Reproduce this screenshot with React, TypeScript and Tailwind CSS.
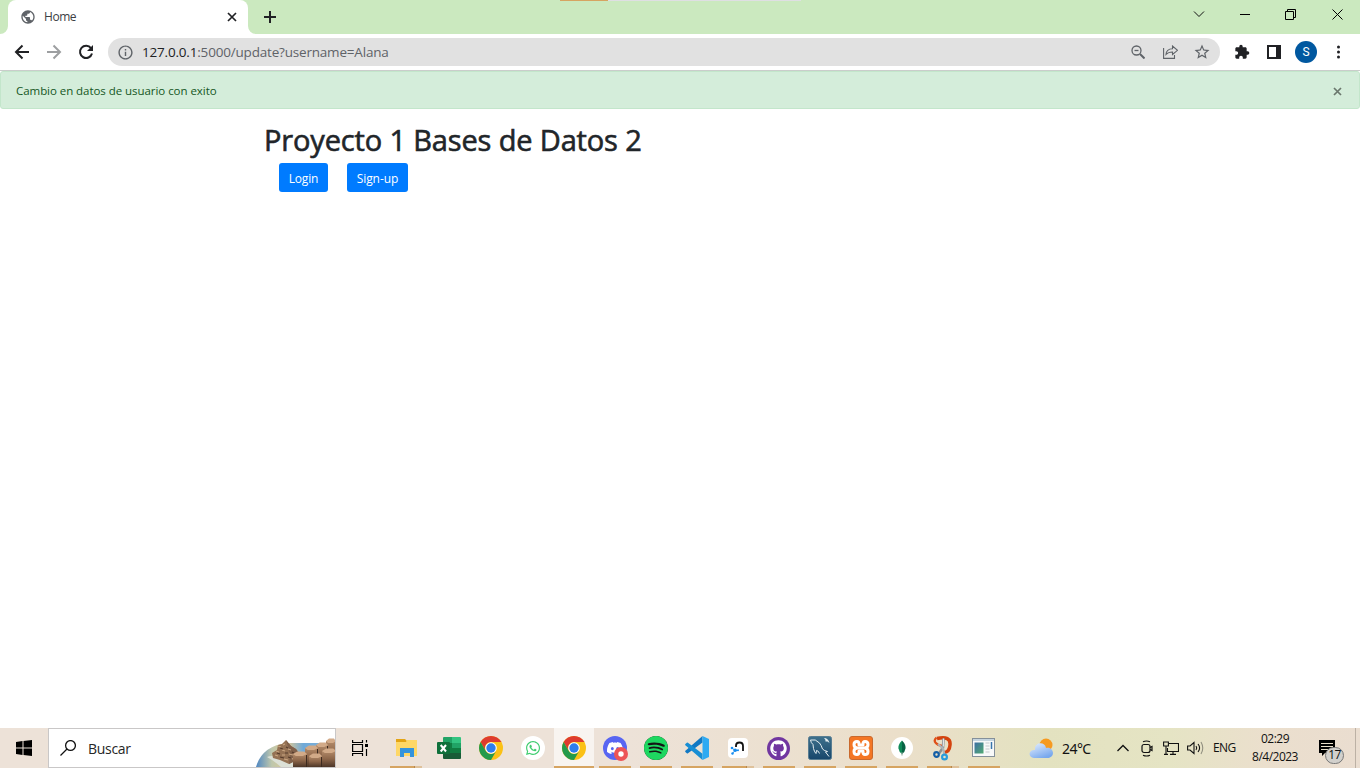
import type { ReactNode } from 'react';
import { MdExtension, MdInfoOutline, MdPublic, MdStarBorder } from 'react-icons/md';
import { SiSpotify, SiDiscord } from 'react-icons/si';
import { FaWhatsapp, FaGithub } from 'react-icons/fa';

function TabStrip() {
  return (
    <header className="relative flex h-[34px] bg-[#cbe9bf] pl-2">
      <div className="relative flex h-[34px] w-60 items-center rounded-t-lg bg-white pr-[11px] pl-3">
        <MdPublic className="h-4 w-4 text-[#5f6368]" />
        <span className="ml-2 flex-1 text-[12px] leading-4 tracking-[-0.45px] text-[#3c4043]">Home</span>
        <svg className="h-[10px] w-[10px] text-[#202124]" viewBox="0 0 10 10" fill="none" stroke="currentColor" strokeWidth="1.7">
          <path d="M1 1l8 8M9 1L1 9" />
        </svg>
        <svg className="absolute bottom-0 -left-2 h-2 w-2" viewBox="0 0 8 8" fill="white"><path d="M8 0v8H0a8 8 0 008-8z" /></svg>
        <svg className="absolute -right-2 bottom-0 h-2 w-2" viewBox="0 0 8 8" fill="white"><path d="M0 0v8h8a8 8 0 01-8-8z" /></svg>
      </div>
      <svg className="mt-[11px] ml-4 h-3 w-3" viewBox="0 0 12 12" stroke="#202124" strokeWidth="2"><path d="M6 0v12M0 6h12" /></svg>
      <div className="absolute top-0 left-[560px] flex h-px w-[241px] bg-[#dfdfe3]"><i className="h-px w-12 bg-[#d6a461]" /></div>
      <div className="ml-auto flex h-7 [&>span]:flex [&>span]:w-[46px] [&>span]:items-center [&>span]:justify-center">
        <span><svg className="h-3 w-3" viewBox="0 0 12 12" fill="none" stroke="#111"><path d="M1 3.500l5 5 5-5" /></svg></span>
        <span><svg className="h-[11px] w-[11px]" viewBox="0 0 11 11" stroke="#000"><path d="M0 5.500h10" /></svg></span>
        <span><svg className="mr-px h-[11px] w-[11px]" viewBox="0 0 11 11" fill="none" stroke="#000"><path d="M.5 2.500h8v8h-8zM2.500 2.500v-2h8v8h-2" /></svg></span>
        <span><svg className="h-[11px] w-[11px]" viewBox="0 0 11 11" stroke="#000"><path d="M.5.5l10 10M10.500.5l-10 10" /></svg></span>
      </div>
    </header>
  );
}

function Toolbar() {
  return (
    <div className="flex h-[37px] items-center border-b border-[#cacdcb] bg-white pr-[14px] pl-3">
      <svg className="h-5 w-5" viewBox="0 0 20 20" fill="none" stroke="#202124" strokeWidth="2"><path d="M17 10H4.500M10.500 3.500L4 10l6.500 6.500" /></svg>
      <svg className="ml-3 h-5 w-5" viewBox="0 0 20 20" fill="none" stroke="#9d9fa1" strokeWidth="2"><path d="M3 10h12.500M9.500 3.500L16 10l-6.500 6.500" /></svg>
      <svg className="ml-3 h-5 w-5" viewBox="0 0 20 20" fill="none" stroke="#202124" strokeWidth="2"><path d="M15 6.200A6.100 6.100 0 1016 11.500" /><path d="M17 3v6h-6z" fill="#202124" stroke="none" /></svg>
      <div className="ml-3 flex h-7 w-[1112px] items-center rounded-full bg-[#e1e1e1] pr-[10px] pl-[9px] text-[#5f6368]">
        <MdInfoOutline className="h-[17px] w-[17px]" />
        <span className="ml-[8px] flex-1 text-[13.500px] leading-5 tracking-[-0.190px]"><b className="font-normal text-[#202124]">127.0.0.1</b>:5000/update?username=Alana</span>
        <svg className="h-[14px] w-[14px]" viewBox="0 0 14 14" fill="none" stroke="currentColor" strokeWidth="1.300"><circle cx="5.500" cy="5.500" r="4.500" /><path d="M3.500 5.500h4" /><path d="M9 9l4.500 4.500" strokeWidth="2" /></svg>
        <svg className="ml-[18px] h-[14px] w-[15px]" viewBox="0 0 15 14" fill="none" stroke="currentColor" strokeWidth="1.100"><path d="M.6 3v10.400h10.900V10" /><path d="M3 9.500C3 6 5.500 3.800 9.500 3.800V1l5 4.300-5 4.200V7C6.500 7 4.500 7.800 3 9.500z" /></svg>
        <MdStarBorder className="-mr-px ml-[15px] h-[18px] w-[18px]" />
      </div>
      <MdExtension className="ml-[14px] h-4 w-4 text-[#202124]" />
      <svg className="ml-[17px] h-[14px] w-[14px]" viewBox="0 0 14 14"><path fill="#202124" fillRule="evenodd" d="M0 0h14v14H0zM2 2v10h7V2z" /></svg>
      <span className="ml-[14px] flex h-[22px] w-[22px] items-center justify-center rounded-full bg-[#0158a0] font-[Roboto,sans-serif] text-[12px] text-white">S</span>
      <svg className="ml-auto h-[14px] w-4" viewBox="0 0 16 14" fill="#202124"><circle cx="8.500" cy="2" r="1.500" /><circle cx="8.500" cy="7" r="1.500" /><circle cx="8.500" cy="12" r="1.500" /></svg>
    </div>
  );
}

function Page() {
  return (
    <main className="flex-1 bg-white">
      <div className="flex h-[38px] items-center justify-between rounded-[3px] border border-[#c3e6cb] bg-[#d4edda] pr-[17px] pl-[15px] text-[#155724]">
        <span className="pt-[2px] text-[11.500px] leading-[18px] tracking-[-0.050px]">Cambio en datos de usuario con exito</span>
        <svg className="mt-[3px] h-[9px] w-[9px]" viewBox="0 0 9 9" stroke="#6a776d" strokeWidth="1.700"><path d="M1 1l7 7M8 1L1 8" /></svg>
      </div>
      <div className="pt-[14px] pl-[264px]">
        <h1 className="h-[36px] text-[29px] leading-[34px] font-medium tracking-[-0.150px] whitespace-nowrap text-[#212529] [-webkit-text-stroke:0.6px_#212529]">Proyecto 1 Bases de Datos 2</h1>
        <div className="mt-[4px] ml-[15px] flex gap-[19px] text-[12px] text-white">
          <button className="h-[29px] w-[49px] rounded-[3px] bg-[#007bff] pt-[2px] tracking-[-0.150px]">Login</button>
          <button className="h-[29px] w-[61px] rounded-[3px] bg-[#007bff] pt-[2px] tracking-[-0.050px]">Sign-up</button>
        </div>
      </div>
    </main>
  );
}

function Chrome() {
  return (
    <svg className="h-6 w-6" viewBox="0 0 24 24">
      <circle cx="12" cy="12" r="12" fill="#fbc116" />
      <path d="M1.610 6A12 12 0 0122.390 6H12a6 6 0 00-5.200 9z" fill="#de3b2f" />
      <path d="M1.610 6L6.800 15A6 6 0 0012 18a6 6 0 005.200-3L12 24A12 12 0 011.610 6z" fill="#239a4b" />
      <circle cx="12" cy="12" r="5.800" fill="#fff" /><circle cx="12" cy="12" r="4.700" fill="#2f7ded" />
    </svg>
  );
}

function Explorer() {
  return (
    <svg className="h-[20px] w-[22px]" viewBox="0 0 22 20">
      <path d="M0 1h9l2 2h10v15H0z" fill="#e3a414" /><path d="M0 4h10l1-2h10v16H0z" fill="#fed766" />
      <path d="M4 19v-9h14v9h-4v-4H8v4z" fill="#3594dc" />
    </svg>
  );
}

function Excel() {
  return (
    <svg className="h-[22px] w-6" viewBox="0 0 24 22">
      <path fill="#21a366" d="M7 0h9v6H6V1q0-1 1-1z" /><path fill="#33c481" d="M15 0h8q1 0 1 1v5h-9z" />
      <path fill="#107c41" d="M6 6h9v10H6z" /><path fill="#21a366" d="M15 6h9v5h-9z" /><path fill="#107c41" d="M15 11h9v5h-9z" />
      <path fill="#185c37" d="M6 16h18v5q0 1-1 1H7q-1 0-1-1z" /><rect y="5" width="13" height="12" rx="1" fill="#0f703b" />
      <path d="M3.700 8l5.300 6.500M9 8l-5.300 6.500" stroke="#fff" strokeWidth="2" />
    </svg>
  );
}

function Discord() {
  return (
    <span className="relative flex h-6 w-6 items-center justify-center rounded-full bg-[#5865f2]">
      <SiDiscord className="h-4 w-4 text-white" />
      <svg className="absolute -right-[1px] -bottom-[1px] h-[14px] w-[14px]" viewBox="0 0 14 14"><circle cx="7" cy="7" r="7" fill="#ed5355" /><circle cx="7" cy="7" r="2.700" fill="#fff" /></svg>
    </span>
  );
}

function Neo4j() {
  return (
    <svg className="h-5 w-5" viewBox="0 0 20 20">
      <rect width="20" height="20" rx="4" fill="#fff" />
      <path d="M8 9V7.500q0-3 3.500-3T15 8v5" fill="none" stroke="#111" strokeWidth="1.800" />
      <path d="M4 10l3 2.500h3M4 16l3-3.500" stroke="#2f9bed" strokeWidth="1" fill="none" />
      <g fill="#168cf0"><circle cx="4" cy="10" r="1.300" /><circle cx="7.200" cy="12.300" r="1.800" /><circle cx="4.500" cy="15.500" r="1.200" /><circle cx="10" cy="12.300" r="1" /></g>
    </svg>
  );
}

function MySql() {
  return (
    <svg className="h-6 w-6" viewBox="0 0 24 24">
      <defs><linearGradient id="sql" x2="0" y2="1"><stop stopColor="#3f718c" /><stop offset="1" stopColor="#17466b" /></linearGradient></defs>
      <rect x=".5" y=".5" width="23" height="23" rx="2" fill="url(#sql)" stroke="#587d92" />
      <path d="M2.500 4q5-1.500 9 3 2 2.500 3 6 2 2 5 2.500l-2 .5 3.500 4.500M2.500 4q.5 3 2.500 4.500l.5 4q1 4 2.500 5l.5-3q2 0 3 3" fill="none" stroke="#e4edf1" />
      <path d="M16 2q4 0 5.500 5l-2-1.500-2 0q.5-2-1.500-3.500z" fill="#e4edf1" />
    </svg>
  );
}

function Snip() {
  return (
    <svg className="h-[25px] w-[20px]" viewBox="0 0 20 25" fill="none">
      <path d="M4 2.500q14-3 13 6.500-.5 7-6 7.500" stroke="#d4430e" strokeWidth="3.500" /><path d="M3.500 1.500C-.5 5 3 9 9 10" stroke="#e05019" strokeWidth="2.300" />
      <path d="M10.500 2.500l-.5 9-4 6" stroke="#8a9196" strokeWidth="2.600" /><path d="M10.500 2.500l-.2 8" stroke="#e2e5e7" strokeWidth="1.200" /><path d="M5 8l5 4.500 1.500 6" stroke="#aeb4b8" strokeWidth="2.200" />
      <circle cx="3.500" cy="18.500" r="2.300" stroke="#155fa6" strokeWidth="2.200" /><circle cx="11.500" cy="21" r="2.400" stroke="#289cdc" strokeWidth="2.200" />
    </svg>
  );
}

function AppWindow() {
  return (
    <svg className="h-[20px] w-6" viewBox="0 0 24 20">
      <rect x=".5" y=".5" width="22" height="18" fill="#f8f9f9" stroke="#84909a" /><path d="M1 1h21v2H1z" fill="#c6d5df" />
      <defs><linearGradient id="win" x2="1" y2="1"><stop stopColor="#3d6fa4" /><stop offset="1" stopColor="#52aa72" /></linearGradient></defs>
      <path d="M2.500 4.500h9v11h-9z" fill="url(#win)" /><path d="M13.500 5h4M13.500 8h4M13.500 11h4M13.500 14h4" stroke="#c4c9cc" /><path d="M19.500 4v7" stroke="#3975ab" strokeWidth="1.500" />
    </svg>
  );
}

function Vscode() {
  return (
    <svg className="h-6 w-6" viewBox="0 0 24 24">
      <path d="M17.500 0v6.500L3 17.300q-.6.400-1.200 0l-1.400-1.300q-.6-.7 0-1.300z" fill="#1279c4" />
      <path d="M.4 8l1.400-1.300q.6-.4 1.200 0l14.500 11V24L.4 9.300q-.6-.7 0-1.300z" fill="#188ed4" />
      <path d="M17.500 0L24 3v18l-6.500 3z" fill="#2faaf2" />
    </svg>
  );
}

function XamppMark() {
  return (
    <svg className="h-[18px] w-[18px]" viewBox="0 0 18 18" fill="none" stroke="#fff" strokeWidth="3" strokeLinecap="round" strokeLinejoin="round">
      <path d="M5 9Q2 8.500 2 5.500T5 2.500Q7 2.500 7 5v1h4V5q0-2.500 2-2.500 3 0 3 3T13 9q3 .5 3 3.500t-3 3q-2 0-2-2.500v-1H7v1q0 2.500-2 2.500-3 0-3-3T5 9z" />
      <path d="M6 9h6" />
    </svg>
  );
}

function Column({ x, y, w }: { x: number; y: number; w: number }) {
  return (
    <g>
      <rect x={x} y={y} width={w} height={31 - y} fill="url(#rock)" />
      <path d={`M${x} ${y}l${w * 0.3}-2.500h${w * 0.5}l${w * 0.2} 2.500-${w * 0.3} 2h-${w * 0.5}z`} fill="#d2aa88" />
      <rect x={x + w - 1} y={y + 1} width="1" height={30 - y} fill="#3d2a1f" />
    </g>
  );
}

function SearchArt() {
  return (
    <svg className="h-[31px] w-20" viewBox="0 0 80 31">
      <defs>
        <linearGradient id="sea" x2="1" y2="0"><stop stopColor="#4f87c2" /><stop offset=".2" stopColor="#bfc7ac" /><stop offset=".4" stopColor="#dcc996" /><stop offset=".6" stopColor="#6fa9d8" /><stop offset="1" stopColor="#86b4d6" /></linearGradient>
        <linearGradient id="rock" x2="0" y2="1"><stop stopColor="#b28a69" /><stop offset=".5" stopColor="#8c6549" /><stop offset="1" stopColor="#4d3628" /></linearGradient>
      </defs>
      <path d="M1 31Q7 10 32 7h48v24z" fill="url(#sea)" />
      <path d="M12 21q6-3 15 2 14 0 14 8H26q-8-7-14-10z" fill="#dce0d6" />
      <path d="M17 17l5-3 1-5 4-1 4-4 5 6 5 3 3 4-2 7-8 4-9-4-7-2z" fill="#957254" />
      <path d="M31 4l5 6 5 3 3 4-2 7-8 4 1-10z" fill="#80604a" />
      <path d="M23 10l3 1M28 9l2-1M21 15l3 1M27 14l3 1M33 13l3 1M20 19l3 1M27 19l3 0M34 18l4 1M29 23l4 1M37 23l3-1" fill="none" stroke="#c9a581" strokeWidth="1.200" />
      <path d="M25 12l3 1M31 11l2 1M22 17l3 1M30 17l3 0M37 16l2 1M25 21l4 1M33 21l3 1" fill="none" stroke="#543a2a" strokeWidth="1.100" />
      <Column x={71} y={5} w={10} /><Column x={61} y={9} w={12} />
      <Column x={50} y={12} w={13} /><Column x={67} y={15} w={14} />
      <Column x={38} y={18} w={14} /><Column x={54} y={20} w={13} />
    </svg>
  );
}

type Item = { name: string; icon: ReactNode; bar?: 'one' | 'many'; active?: boolean };

const pinned: Item[] = [
  { name: 'Explorer', icon: <Explorer />, bar: 'many' },
  { name: 'Excel', icon: <Excel /> },
  { name: 'Chrome', icon: <Chrome /> },
  { name: 'WhatsApp', icon: <span className="flex h-6 w-6 items-center justify-center rounded-full bg-white text-[#40cd70]"><FaWhatsapp className="h-4 w-4" /></span> },
];

const running: Item[] = [
  { name: 'Chrome', icon: <Chrome />, bar: 'one', active: true },
  { name: 'Discord', icon: <Discord />, bar: 'one' },
  { name: 'Spotify', icon: <span className="flex h-6 w-6 rounded-full bg-[#151515]"><SiSpotify className="h-6 w-6 text-[#1ed760]" /></span>, bar: 'one' },
  { name: 'Code', icon: <Vscode />, bar: 'one' },
  { name: 'Neo4j', icon: <Neo4j />, bar: 'many' },
  { name: 'GitHub', icon: <span className="mr-px flex h-[23px] w-[23px] items-center justify-center rounded-full bg-[#7136a0]"><FaGithub className="h-[17px] w-[17px] text-white" /></span>, bar: 'one' },
  { name: 'MySQL', icon: <MySql />, bar: 'one' },
  { name: 'XAMPP', icon: <span className="flex h-6 w-6 items-center justify-center rounded-[3px] border border-[#c9692d] bg-[#f47624]"><XamppMark /></span>, bar: 'one' },
  { name: 'MongoDB', icon: <svg className="h-[22px] w-[22px]" viewBox="0 0 22 22"><circle cx="11" cy="11" r="11" fill="#fff" /><path d="M11 3.500Q7 7.500 7.500 11.500 8 15 11 17z" fill="#0f8a58" /><path d="M11 3.500q4 4 3.500 8Q14 15 11 17z" fill="#076344" /><path d="M11 15v3.500" stroke="#7f9f8f" /></svg>, bar: 'one' },
  { name: 'Snip', icon: <Snip />, bar: 'many' },
  { name: 'Window', icon: <AppWindow />, bar: 'one' },
];

function Underline({ kind }: { kind?: 'one' | 'many' }) {
  if (!kind) return null;
  return <span className="absolute bottom-0 left-1 flex h-[2px] w-8 bg-[#d6a461]">{kind === 'many' && <i className="ml-auto h-[2px] w-[8px] border-l border-[#b7894f] bg-[#dfc19a]" />}</span>;
}

function Taskbar() {
  return (
    <footer className="flex h-10 bg-[linear-gradient(90deg,#ede2d8_0%,#ede2d8_46%,#ebdfca_66%,#e3e2c0_77%,#e5e4c4_86%,#ebdfcd_93%,#eaddd0_100%)] text-[#111]">
      <div className="flex w-12 items-center justify-center">
        <svg className="h-4 w-4" viewBox="0 0 16 16" fill="#000"><path d="M0 2l6.500-1v6.500H0zM7.500.9L16 0v7.500H7.500zM0 8.500h6.500V15L0 14zM7.500 8.500H16V16l-8.500-1z" /></svg>
      </div>
      <div className="flex w-72 items-center border border-[#c9c7c7] bg-white pl-[11px]">
        <svg className="h-4 w-4" viewBox="0 0 16 16" fill="none" stroke="#111" strokeWidth="1.300"><circle cx="10.500" cy="5.500" r="4.900" /><path d="M7 9L.5 15.500" /></svg>
        <span className="ml-3 text-[14px] tracking-[-0.300px] text-[#262626]">Buscar</span>
        <span className="mt-auto ml-auto"><SearchArt /></span>
      </div>
      <div className="flex w-[50px] items-center justify-center pr-[2px]">
        <svg className="h-4 w-[17px]" viewBox="0 0 17 16" fill="none" stroke="#000" strokeWidth="1.200"><path d="M.6 4.500h9.900v7H.6zM.6 0v2.500h9.900V0M.6 16v-2.500h9.900V16M14.500 0v2.500M14.500 9v7" /><path d="M13 4h3v3h-3z" fill="#000" stroke="none" /></svg>
      </div>
      {pinned.map((app) => (
        <div key={app.name} aria-label={app.name} className="relative flex h-10 w-[42px] items-center justify-center"><Underline kind={app.bar} />{app.icon}</div>
      ))}
      {running.map((app) => (
        <div key={app.name} aria-label={app.name} className={app.active ? 'relative mr-px flex h-10 w-10 items-center justify-center border-b-2 border-[#d6a461] bg-[#f8f4f0] pt-[2px]' : 'relative mr-px flex h-10 w-10 items-center justify-center'}>
          {!app.active && <Underline kind={app.bar} />}{app.icon}
        </div>
      ))}
      <div className="flex flex-1 items-center pl-[24px]">
        <svg className="h-[22px] w-[25px]" viewBox="0 0 25 22">
          <defs><linearGradient id="cloud" x2="0.6" y2="1"><stop stopColor="#e6f0ff" /><stop offset="1" stopColor="#78a8ed" /></linearGradient></defs>
          <circle cx="17" cy="8" r="6.500" fill="#f69a20" /><path d="M5 21C-2 20 0 12 6 13 5 5 16 4 17 11c7-2 10 8 3 10z" fill="url(#cloud)" />
        </svg>
        <span className="ml-[8px] w-[55px] font-['Noto_Sans',sans-serif] text-[14px] tracking-[-0.550px]">24°C</span>
        <svg className="h-2 w-3" viewBox="0 0 12 8" fill="none" stroke="#111" strokeWidth="1.300"><path d="M.5 7L6 1.500 11.500 7" /></svg>
        <svg className="ml-[12px] h-[17px] w-3" viewBox="0 0 12 17" fill="none" stroke="#111" strokeWidth="1.200"><rect x="1" y="4.500" width="8" height="8" rx="2" /><path d="M9 7.500l2-1v4l-2-1M2 1.800q3.500-1.600 7 0M2 15.200q3.500 1.600 7 0" /></svg>
        <svg className="ml-[10px] h-[14px] w-4" viewBox="0 0 16 14" fill="none" stroke="#111" strokeWidth="1.100"><path d="M6 2.500h9.500v8h-11V7M.6 1h4.800v4H.6zM3 5v8.500M1 13.400h4M10 11v2.500M7 13.400h6" /></svg>
        <svg className="ml-[8px] h-[14px] w-[17px]" viewBox="0 0 17 14" fill="none" stroke="#111" strokeWidth="1.100"><path d="M.6 5H3l4-3.500v11L3 9H.6zM9 5q1.500 2 0 4M11 3q3.200 4 0 8" /><path d="M14 1q3.500 6 0 12" stroke="#929080" /></svg>
        <span className="ml-[9px] w-[27px] text-[12px] tracking-[-0.600px]">ENG</span>
        <div className="ml-[9px] w-[52px] text-center text-[12px] leading-[18px] tracking-[-0.520px] whitespace-nowrap"><div>02:29</div><div>8/4/2023</div></div>
        <div className="relative ml-[18px] h-[17px] w-4">
          <svg className="h-[17px] w-4" viewBox="0 0 16 17"><path fill="#000" d="M0 0h16v13H6l-3 3v-3H0z" /><path d="M2 3.500h12M2 6.500h12M2 9.500h8" stroke="#e9dfca" /></svg>
          <span className="absolute top-[7px] left-[6px] flex h-[17px] w-[19px] items-center justify-center rounded-full border border-[#777] bg-[#d2d0cc] text-[12px] tracking-[-0.500px]">17</span>
        </div>
        <i className="ml-auto h-10 w-[5px] border-l border-[#bcb1a5]" />
      </div>
    </footer>
  );
}

export default function App() {
  return (
    <div className="flex h-screen w-screen flex-col overflow-hidden bg-white font-['Open_Sans','Noto_Sans',sans-serif]">
      <TabStrip />
      <Toolbar />
      <Page />
      <Taskbar />
    </div>
  );
}
